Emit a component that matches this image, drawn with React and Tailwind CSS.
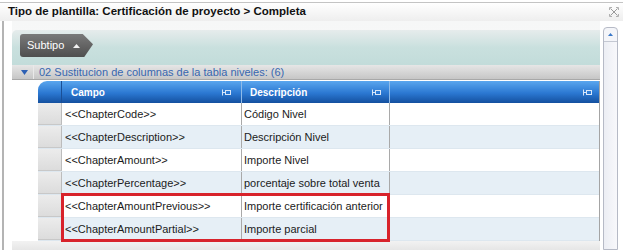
import React from 'react';

const rows = [
  ['<<ChapterCode>>', 'Código Nivel'],
  ['<<ChapterDescription>>', 'Descripción Nivel'],
  ['<<ChapterAmount>>', 'Importe Nivel'],
  ['<<ChapterPercentage>>', 'porcentaje sobre total venta'],
  ['<<ChapterAmountPrevious>>', 'Importe certificación anterior'],
  ['<<ChapterAmountPartial>>', 'Importe parcial'],
];

const Pin = () => (
  <svg width="10" height="7" viewBox="0 0 10 7" className="shrink-0">
    <path d="M0.5 0.5v6M0.5 3.5h3" stroke="#d8e6f8" strokeWidth="1" fill="none" />
    <rect x="3.5" y="1.5" width="5" height="4" fill="none" stroke="#d8e6f8" strokeWidth="1" />
  </svg>
);

const Row = ({ field, desc, i }) => (
  <div className={`flex h-[23px] border-b border-[#dde7ef] ${i % 2 ? 'bg-[#e6eff6]' : 'bg-white'}`}>
    <div className="w-[24px] shrink-0 bg-gradient-to-b from-[#ececec] to-[#dcdcdc] border-r border-[#bcbcbc] border-b border-b-[#c8c8c8]" />
    <div className="w-[180px] shrink-0 border-r border-[#a9a9a9] pl-[3px] flex items-center text-[11px] text-[#1b1b1b]">
      {field}
    </div>
    <div className="w-[148px] shrink-0 border-r border-[#a9a9a9] pl-[2px] flex items-center text-[11px] text-[#1b1b1b]">
      {desc}
    </div>
    <div className="flex-1" />
  </div>
);

export default function App() {
  return (
    <div className="w-[623px] h-[250px] overflow-hidden bg-white flex flex-col font-['Liberation_Sans',Arial,sans-serif]">
      {/* title bar */}
      <div className="mt-[2px] h-[19px] shrink-0 border-t border-[#c4c4c4] bg-gradient-to-b from-white to-[#eeeeee] flex items-center justify-between pl-[8px] pr-[4px]">
        <span className="text-[11.5px] font-bold text-[#111]">
          Tipo de plantilla: Certificación de proyecto &gt; Completa
        </span>
        <svg width="10" height="10" viewBox="0 0 10 10">
          <path d="M1.5 1.5l7 7M8.5 1.5l-7 7" stroke="#9a9a9a" strokeWidth="1" />
          <path d="M0.5 3V0.5H3M7 0.5h2.5V3M9.5 7v2.5H7M3 9.5H0.5V7" stroke="#b0b0b0" strokeWidth="1" fill="none" />
        </svg>
      </div>

      <div className="flex flex-1 min-h-0">
        {/* window left frame */}
        <div className="w-[12px] shrink-0 flex">
          <div className="ml-[2px] w-[2px] border-l border-r border-[#b4b4b4] bg-[#efefef]" />
        </div>

        {/* main content */}
        <div className="w-[588px] shrink-0 flex flex-col pt-[9px] bg-gradient-to-b from-[#f6f7f7] to-white">
          {/* teal panel with tab */}
          <div className="h-[35px] rounded-tl-[5px] bg-gradient-to-b from-[#e6ecec] via-[#c9e0de] to-[#c2dcda] pl-[8px] pt-[4px]">
            <div className="w-[73px] h-[23px] rounded-l-[3px] bg-gradient-to-b from-[#7a7a7a] to-[#4f4f4f] [clip-path:polygon(0_0,86%_0,100%_45%,88%_100%,0_100%)] flex items-center pl-[7px] gap-[9px]">
              <span className="text-[11px] text-white">Subtipo</span>
              <svg width="7" height="4" viewBox="0 0 7 4"><path d="M0 4L3.5 0L7 4Z" fill="#f2f2f2" /></svg>
            </div>
          </div>

          {/* group row */}
          <div className="h-[15px] shrink-0 bg-gradient-to-b from-[#e6e6e6] to-[#c6c6c6] border-b border-[#a8a8a8] flex items-center">
            <div className="w-[22px] shrink-0 flex justify-center pl-[4px] border-r border-[#e9e9e9] h-full items-center">
              <svg width="7" height="5" viewBox="0 0 7 5"><path d="M0 0H7L3.5 5Z" fill="#2d60b4" /></svg>
            </div>
            <span className="pl-[5px] text-[11px] text-[#3867b0] leading-none">
              02 Sustitucion de columnas de la tabla niveles: (6)
            </span>
          </div>

          {/* table */}
          <div className="flex flex-1 min-h-0 pt-[1px] bg-white">
            <div className="w-[26px] shrink-0" />
            <div className="flex-1 flex flex-col border-r border-[#a4a4a4] border-b border-b-[#b8b8b8] h-[161px]">
              {/* header */}
              <div className="h-[22px] shrink-0 flex rounded-tl-[9px] bg-[#2569c2] bg-[linear-gradient(to_bottom,#5aa6ee,#2b78d2_55%,#14509f)] text-white text-[10px] font-bold overflow-hidden">
                <div className="w-[24px] shrink-0 border-r border-[#1a4f96]" />
                <div className="w-[180px] shrink-0 border-r border-[#8fbbe9] flex items-center justify-between pl-[9px] pr-[9px]">
                  <span>Campo</span>
                  <Pin />
                </div>
                <div className="w-[148px] shrink-0 border-r border-[#8fbbe9] flex items-center justify-between pl-[8px] pr-[7px]">
                  <span>Descripción</span>
                  <Pin />
                </div>
                <div className="flex-1 flex items-center justify-end pr-[6px]">
                  <Pin />
                </div>
              </div>

              {rows.slice(0, 4).map((r, i) => (
                <Row key={i} field={r[0]} desc={r[1]} i={i} />
              ))}
              <div className="relative">
                {rows.slice(4).map((r, i) => (
                  <Row key={i + 4} field={r[0]} desc={r[1]} i={i + 4} />
                ))}
                <div className="absolute left-[23px] top-[-2px] w-[329px] h-[49px] border-[3px] border-[#d8232b] pointer-events-none" />
              </div>
            </div>
          </div>
          <div className="h-[9px] shrink-0 bg-gradient-to-b from-[#f2f2f2] to-[#e6e6e6]" />
        </div>

        {/* scrollbar */}
        <div className="w-[23px] shrink-0 flex pl-[3px] pt-[6px]">
          <div className="w-[15px] flex flex-col rounded-t-[4px] border border-[#b6bac6] bg-[#f4f5f9]">
            <div className="h-[14px] border-b border-[#c4c8d2] flex items-center justify-center">
              <svg width="5" height="3" viewBox="0 0 5 3"><path d="M0 3L2.5 0L5 3Z" fill="#3a78c8" /></svg>
            </div>
            <div className="flex-1 bg-gradient-to-r from-[#eceef4] to-[#f8f8fb]" />
          </div>
        </div>
      </div>
    </div>
  );
}
